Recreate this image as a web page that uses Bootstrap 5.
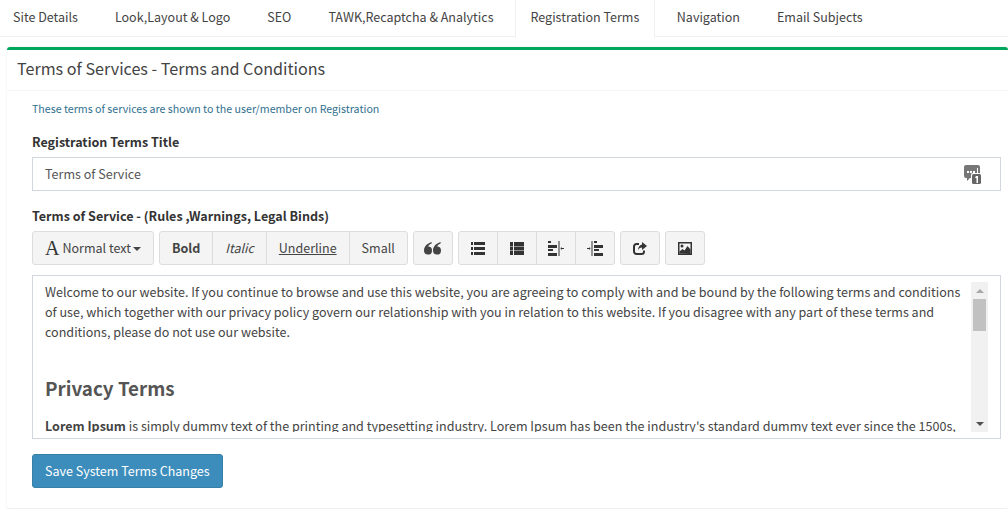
<!DOCTYPE html>
<html lang="en">
<head>
  <meta charset="UTF-8">
  <meta name="viewport" content="width=device-width, initial-scale=1.0">
  <title>System Settings</title>
  <link href="https://cdn.jsdelivr.net/npm/bootstrap@5.3.5/dist/css/bootstrap.min.css" rel="stylesheet">
  <script src="https://cdn.jsdelivr.net/npm/bootstrap@5.3.5/dist/js/bootstrap.bundle.min.js"></script>
  <style>
    body { font-family: "Noto Sans CJK SC", "Liberation Sans", sans-serif; font-size: 12.55px; line-height: 20px; color: #444; background: #fff; overflow: hidden; }
    .settings-tabs { border-bottom: 1px solid #f0f0f0; height: 37px; flex-wrap: nowrap; }
    .settings-tabs .nav-link { color: #444; font-size: 12.53px; padding: 7px 18.5px 9px; height: 37px; border: 0; border-radius: 0; margin: 0; white-space: nowrap; }
    .settings-tabs .nav-item:first-child .nav-link { padding-left: 13px; }
    .settings-tabs .nav-link.active { color: #444; background: #fff; border: solid #f0f0f0; border-width: 0 1px 1px; border-bottom-color: #fff; height: 38px; margin: 0 3px 0 2.5px; padding-left: 15px; padding-right: 15px; }
    .terms-box { margin: 10px 0 0 7px; height: 462px; border-top: 3px solid #00a65a; border-bottom: 1px solid #eee; border-radius: 3px; box-shadow: 0 0 2px rgba(0,0,0,.1); }
    .terms-head { height: 41px; padding: 7px 10px; font-size: 16.15px; line-height: 22px; border-bottom: 1px solid #f4f4f4; color: #444; }
    .terms-body { padding: 9px 7px 0 25px; }
    .terms-note { font-size: 10.65px; line-height: 17px; color: #31708f; margin-bottom: 15px; }
    .field-label { font-weight: 700; font-size: 12.57px; line-height: 20px; margin-bottom: 5px; color: #333; }
    .title-field { height: 34px; padding: 6px 12px; border: 1px solid #d2d6de; color: #555; margin-bottom: 15px; }
    .wys-bar { gap: 5px; margin-bottom: 10px; height: 34px; margin-top: 5px; }
    .wys-group { display: flex; }
    .wys-btn { background: #f4f4f4; border: 1px solid #ddd; color: #444; height: 34px; padding: 0 12px; font-size: 12.53px; display: flex; align-items: center; border-radius: 0; margin-left: -1px; white-space: nowrap; }
    .wys-group .wys-btn:first-child { border-radius: 3px 0 0 3px; margin-left: 0; }
    .wys-group .wys-btn:last-child { border-radius: 0 3px 3px 0; }
    .wys-group .wys-btn:only-child { border-radius: 3px; }
    .wys-icon { width: 40px; padding: 0; justify-content: center; }
    .font-a { font-family: "Liberation Serif", serif; font-size: 20px; margin-right: 3px; color: #333; }
    .caret-down { border-top: 4px solid #444; border-left: 4px solid transparent; border-right: 4px solid transparent; margin-left: 2px; margin-top: 2px; }
    .editor-frame { height: 164px; border: 1px solid #d2d6de; padding: 6px 12px; margin-bottom: 15px; display: flex; }
    .editor-scroll { flex: 1 1 0; min-width: 0; height: 150px; overflow: hidden; color: #444; padding-right: 4px; }
    .editor-scroll p { margin: 0 0 10px; }
    .editor-scroll h3 { font-size: 18.8px; font-weight: 700; line-height: 26px; margin: 0 0 15px; padding-top: 23px; color: #555; }
    .fake-scrollbar { flex: 0 0 17px; height: 150px; background: #f1f1f1; display: flex; flex-direction: column; align-items: center; padding: 0 2px; }
    .scroll-thumb { width: 13px; height: 32px; background: #c1c1c1; }
    .scroll-up, .scroll-down { width: 0; height: 0; border-left: 4px solid transparent; border-right: 4px solid transparent; }
    .scroll-up { margin: 7px 0 6px; border-bottom: 4px solid #a8a8a8; }
    .scroll-down { margin-top: auto; margin-bottom: 6px; border-top: 4px solid #505050; }
    .save-btn { background: #3c8dbc; border: 1px solid #367fa9; color: #fff; border-radius: 3px; height: 34px; padding: 0 12px; font-size: 12.53px; }
    .msg-icon { position: absolute; right: 19px; top: 7px; }
  </style>
</head>
<body>

  <ul class="nav settings-tabs">
    <li class="nav-item"><a class="nav-link" href="#">Site Details</a></li>
    <li class="nav-item"><a class="nav-link" href="#">Look,Layout &amp; Logo</a></li>
    <li class="nav-item"><a class="nav-link" href="#">SEO</a></li>
    <li class="nav-item"><a class="nav-link" href="#">TAWK,Recaptcha &amp; Analytics</a></li>
    <li class="nav-item"><a class="nav-link active" href="#">Registration Terms</a></li>
    <li class="nav-item"><a class="nav-link" href="#">Navigation</a></li>
    <li class="nav-item"><a class="nav-link" href="#">Email Subjects</a></li>
  </ul>

  <div class="terms-box">
    <div class="terms-head">Terms of Services - Terms and Conditions</div>
    <div class="terms-body">
      <div class="terms-note">These terms of services are shown to the user/member on Registration</div>

      <div class="field-label">Registration Terms Title</div>
      <div class="title-field position-relative">Terms of Service
        <svg class="msg-icon" width="17" height="19" viewBox="0 0 17 19">
          <path d="M2 0h12a2 2 0 0 1 2 2v11H6l-3 3v-3H2a2 2 0 0 1-2-2V2a2 2 0 0 1 2-2z" fill="#777"/>
          <rect x="3" y="6" width="2" height="2" fill="#fff"/><rect x="6" y="6" width="2" height="2" fill="#fff"/><rect x="9" y="6" width="2" height="2" fill="#fff"/><rect x="13" y="3" width="1" height="5" fill="#fff"/>
          <rect x="7" y="8" width="10" height="11" rx="2" fill="#fff"/>
          <rect x="8" y="9" width="9" height="10" rx="1.500" fill="#666"/>
          <path d="M12 11h2v7h-1.500v-5H11z" fill="#fff"/>
        </svg>
      </div>

      <div class="field-label mb-0">Terms of Service - (Rules ,Warnings, Legal Binds)</div>
      <div class="d-flex wys-bar">
        <div class="wys-group"><div class="wys-btn"><span class="font-a">A</span>Normal text<span class="caret-down"></span></div></div>
        <div class="wys-group">
          <div class="wys-btn fw-bold">Bold</div>
          <div class="wys-btn fst-italic">Italic</div>
          <div class="wys-btn text-decoration-underline">Underline</div>
          <div class="wys-btn">Small</div>
        </div>
        <div class="wys-group"><div class="wys-btn wys-icon">
          <svg width="17" height="13" viewBox="0 0 17 13"><path d="M7.500 0C3 1.500 0 4.500 0 8.500a4 4 0 1 0 4.200-4C4.500 3.200 6 2 7.800 1.200zM16.500 0C12 1.500 9 4.500 9 8.500a4 4 0 1 0 4.200-4c.3-1.300 1.800-2.500 3.600-3.300z" fill="#444"/></svg>
        </div></div>
        <div class="wys-group">
          <div class="wys-btn wys-icon">
            <svg width="14" height="13" viewBox="0 0 14 13" fill="#333"><rect x="0" y="0" width="2" height="3"/><rect x="3" y="0" width="11" height="3"/><rect x="0" y="5" width="2" height="3"/><rect x="3" y="5" width="11" height="3"/><rect x="0" y="10" width="2" height="3"/><rect x="3" y="10" width="11" height="3"/></svg>
          </div>
          <div class="wys-btn wys-icon">
            <svg width="14" height="13" viewBox="0 0 14 13" fill="#333"><rect x="0" y="0" width="3" height="4"/><rect x="4" y="0" width="10" height="4"/><rect x="0" y="4.500" width="3" height="4"/><rect x="4" y="4.500" width="10" height="4"/><rect x="0" y="9" width="3" height="4"/><rect x="4" y="9" width="10" height="4"/></svg>
          </div>
          <div class="wys-btn wys-icon">
            <svg width="16" height="15" viewBox="0 0 16 15" fill="#333"><rect x="0" y="0" width="3" height="2"/><rect x="0" y="4" width="9" height="3"/><rect x="0" y="8" width="5" height="2"/><rect x="0" y="12" width="9" height="3"/><rect x="10.500" y="0" width="1" height="15"/><path d="M16 7h-2.500V5.500L12.500 7.500l1 2V8H16z"/></svg>
          </div>
          <div class="wys-btn wys-icon">
            <svg width="16" height="15" viewBox="0 0 16 15" fill="#333"><path d="M0 7h2.500V5.500l1 2-1 2V8H0z"/><rect x="4.500" y="0" width="1" height="15"/><rect x="7" y="0" width="3" height="2"/><rect x="7" y="4" width="9" height="3"/><rect x="7" y="8" width="5" height="2"/><rect x="7" y="12" width="9" height="3"/></svg>
          </div>
        </div>
        <div class="wys-group"><div class="wys-btn wys-icon">
          <svg width="14" height="13" viewBox="0 0 14 13"><path d="M6 2H3.500A2.500 2.500 0 0 0 1 4.500v5A2.500 2.500 0 0 0 3.500 12h5A2.500 2.500 0 0 0 11 9.500V8.500" fill="none" stroke="#333" stroke-width="2"/><path d="M9 0l5 4-5 4V5.500C7 5.500 5.500 6.500 5 8.500 5 5 6.500 3 9 2.500z" fill="#333"/></svg>
        </div></div>
        <div class="wys-group"><div class="wys-btn wys-icon">
          <svg width="14" height="13" viewBox="0 0 14 13"><path d="M0 0h14v13H0z" fill="#333"/><rect x="1.500" y="1.500" width="11" height="10" fill="#f4f4f4"/><circle cx="4" cy="4" r="1.500" fill="#333"/><path d="M1.500 11.500V9.500l3-2.500 2 1.500 3-4.500 3 3.500v4.500z" fill="#333"/></svg>
        </div></div>
      </div>

      <div class="editor-frame">
        <div class="editor-scroll">
          <p>Welcome to our website. If you continue to browse and use this website, you are agreeing to comply with and be bound by the following terms and conditions of use, which together with our privacy policy govern our relationship with you in relation to this website. If you disagree with any part of these terms and conditions, please do not use our website.</p>
          <h3>Privacy Terms</h3>
          <p><strong>Lorem Ipsum</strong> is simply dummy text of the printing and typesetting industry. Lorem Ipsum has been the industry's standard dummy text ever since the 1500s, when an unknown printer took a galley of type and scrambled it to make a type specimen book.</p>
        </div>
        <div class="fake-scrollbar">
          <span class="scroll-up"></span>
          <div class="scroll-thumb"></div>
          <span class="scroll-down"></span>
        </div>
      </div>

      <button type="button" class="btn save-btn">Save System Terms Changes</button>
    </div>
  </div>

</body>
</html>
